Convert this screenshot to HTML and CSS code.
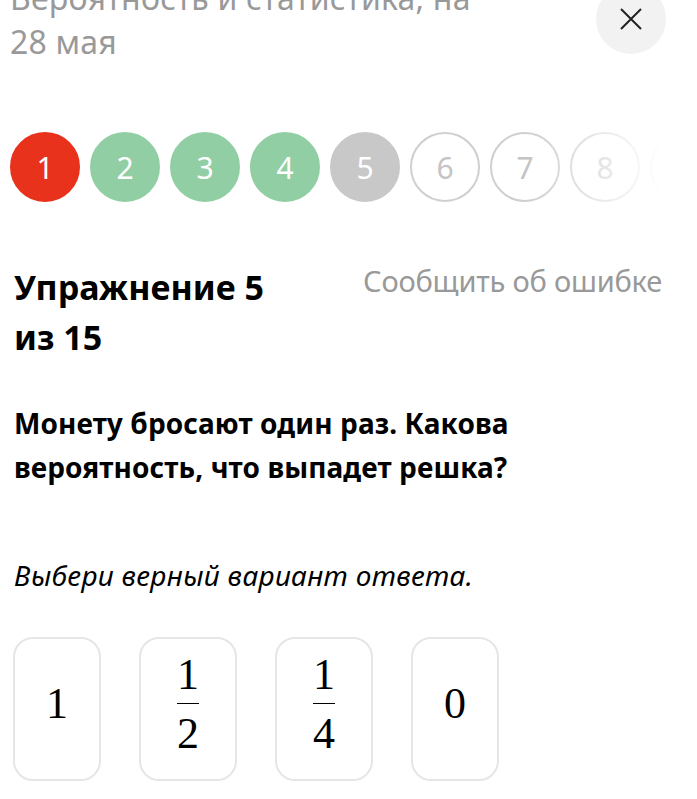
FILE: index.html
```html
<!DOCTYPE html>
<html lang="ru">
<head>
    <meta charset="UTF-8" />
    <meta name="viewport" content="width=device-width, initial-scale=1.0" />
    <title>Упражнение 5 из 15</title>
    <link rel="stylesheet" href="styles.css">
</head>
<body>
    <div class="top-bar">
        <div class="lesson-title">Вероятность и статистика, на<br>28 мая</div>
        <button class="close-btn" aria-label="Закрыть">
            <svg width="24" height="24" viewBox="0 0 24 24">
                <path d="M2 2 L22 22 M22 2 L2 22" stroke="#222" stroke-width="2" fill="none" />
            </svg>
        </button>
    </div>

    <div class="steps">
        <div class="step step-wrong">1</div>
        <div class="step step-right">2</div>
        <div class="step step-right">3</div>
        <div class="step step-right">4</div>
        <div class="step step-current">5</div>
        <div class="step">6</div>
        <div class="step">7</div>
        <div class="step">8</div>
        <div class="step">9</div>
        <div class="step">10</div>
        <div class="steps-fade"></div>
    </div>

    <div class="task-head">
        <h2 class="task-number">Упражнение 5<br>из 15</h2>
        <a class="report-link" href="#">Сообщить об ошибке</a>
    </div>

    <p class="question">Монету бросают один раз. Какова вероятность, что выпадет решка?</p>

    <p class="hint">Выбери верный вариант ответа.</p>

    <div class="answers">
        <button class="answer"><span class="num">1</span></button>
        <button class="answer">
            <span class="frac"><span class="num">1</span><span class="frac-line"></span><span class="num">2</span></span>
        </button>
        <button class="answer">
            <span class="frac"><span class="num">1</span><span class="frac-line"></span><span class="num">4</span></span>
        </button>
        <button class="answer"><span class="num">0</span></button>
    </div>
</body>
</html>
```

FILE: styles.css
```css
body {
    margin: 0;
    padding: 0 14px;
    font-family: "Noto Sans", sans-serif;
    color: #000;
    background: #fff;
    overflow: hidden;
}
.top-bar {
    display: flex;
    justify-content: space-between;
    align-items: flex-start;
    margin-top: -24px;
}
.lesson-title {
    font-size: 32px;
    line-height: 44px;
    color: #999;
    margin-left: -4px;
    letter-spacing: 0.2px;
}
.close-btn {
    width: 70px;
    height: 70px;
    margin-top: 8px;
    margin-right: 17px;
    border: none;
    border-radius: 50%;
    background-color: #f2f2f2;
    display: flex;
    justify-content: center;
    align-items: center;
    padding: 0;
    cursor: pointer;
}
.steps {
    position: relative;
    display: flex;
    gap: 10px;
    margin: 68px -14px 0 -4px;
    overflow: hidden;
}
.step {
    flex: 0 0 70px;
    height: 70px;
    box-sizing: border-box;
    border-radius: 50%;
    border: 2px solid #cfcfcf;
    display: flex;
    justify-content: center;
    align-items: center;
    font-size: 30px;
    color: #c4c4c4;
}
.step-wrong {
    background-color: #e8321c;
    border-color: #e8321c;
    color: #fff;
}
.step-right {
    background-color: #92cea3;
    border-color: #92cea3;
    color: #fff;
}
.step-current {
    background-color: #c8c8c8;
    border-color: #c8c8c8;
    color: #fff;
}
.steps-fade {
    position: absolute;
    top: 0;
    right: 0;
    bottom: 0;
    width: 170px;
    background: linear-gradient(to right, rgba(255, 255, 255, 0), #fff 80%);
}
.task-head {
    display: flex;
    justify-content: space-between;
    align-items: flex-start;
    margin-top: 60px;
}
.task-number {
    margin: 0;
    font-size: 34px;
    line-height: 50px;
    font-weight: 700;
}
.report-link {
    font-size: 29px;
    line-height: 40px;
    color: #999;
    text-decoration: none;
    margin-top: -1px;
    margin-right: 21px;
    letter-spacing: -0.2px;
}
.question {
    margin: 39px 0 0;
    font-size: 28px;
    line-height: 44px;
    font-weight: 700;
    max-width: 540px;
    letter-spacing: 0.1px;
}
.hint {
    margin: 68px 0 0;
    font-size: 28px;
    line-height: 36px;
    font-style: italic;
    letter-spacing: 0.3px;
}
.answers {
    display: flex;
    gap: 38px;
    margin: 44px 0 0 -1px;
}
.answer {
    height: 144px;
    min-width: 88px;
    box-sizing: border-box;
    border: 2px solid #e6e6e6;
    border-radius: 20px;
    background: #fff;
    padding: 0 30px 10px;
    display: flex;
    justify-content: center;
    align-items: center;
    font-family: "Liberation Serif", serif;
    font-size: 44px;
    color: #000;
    cursor: pointer;
}
.num {
    line-height: 1;
}
.frac {
    display: inline-flex;
    flex-direction: column;
    align-items: center;
    padding: 0 6px;
}
.frac-line {
    align-self: stretch;
    border-top: 1.5px solid #000;
    margin: 6px 0 8px;
}
```
